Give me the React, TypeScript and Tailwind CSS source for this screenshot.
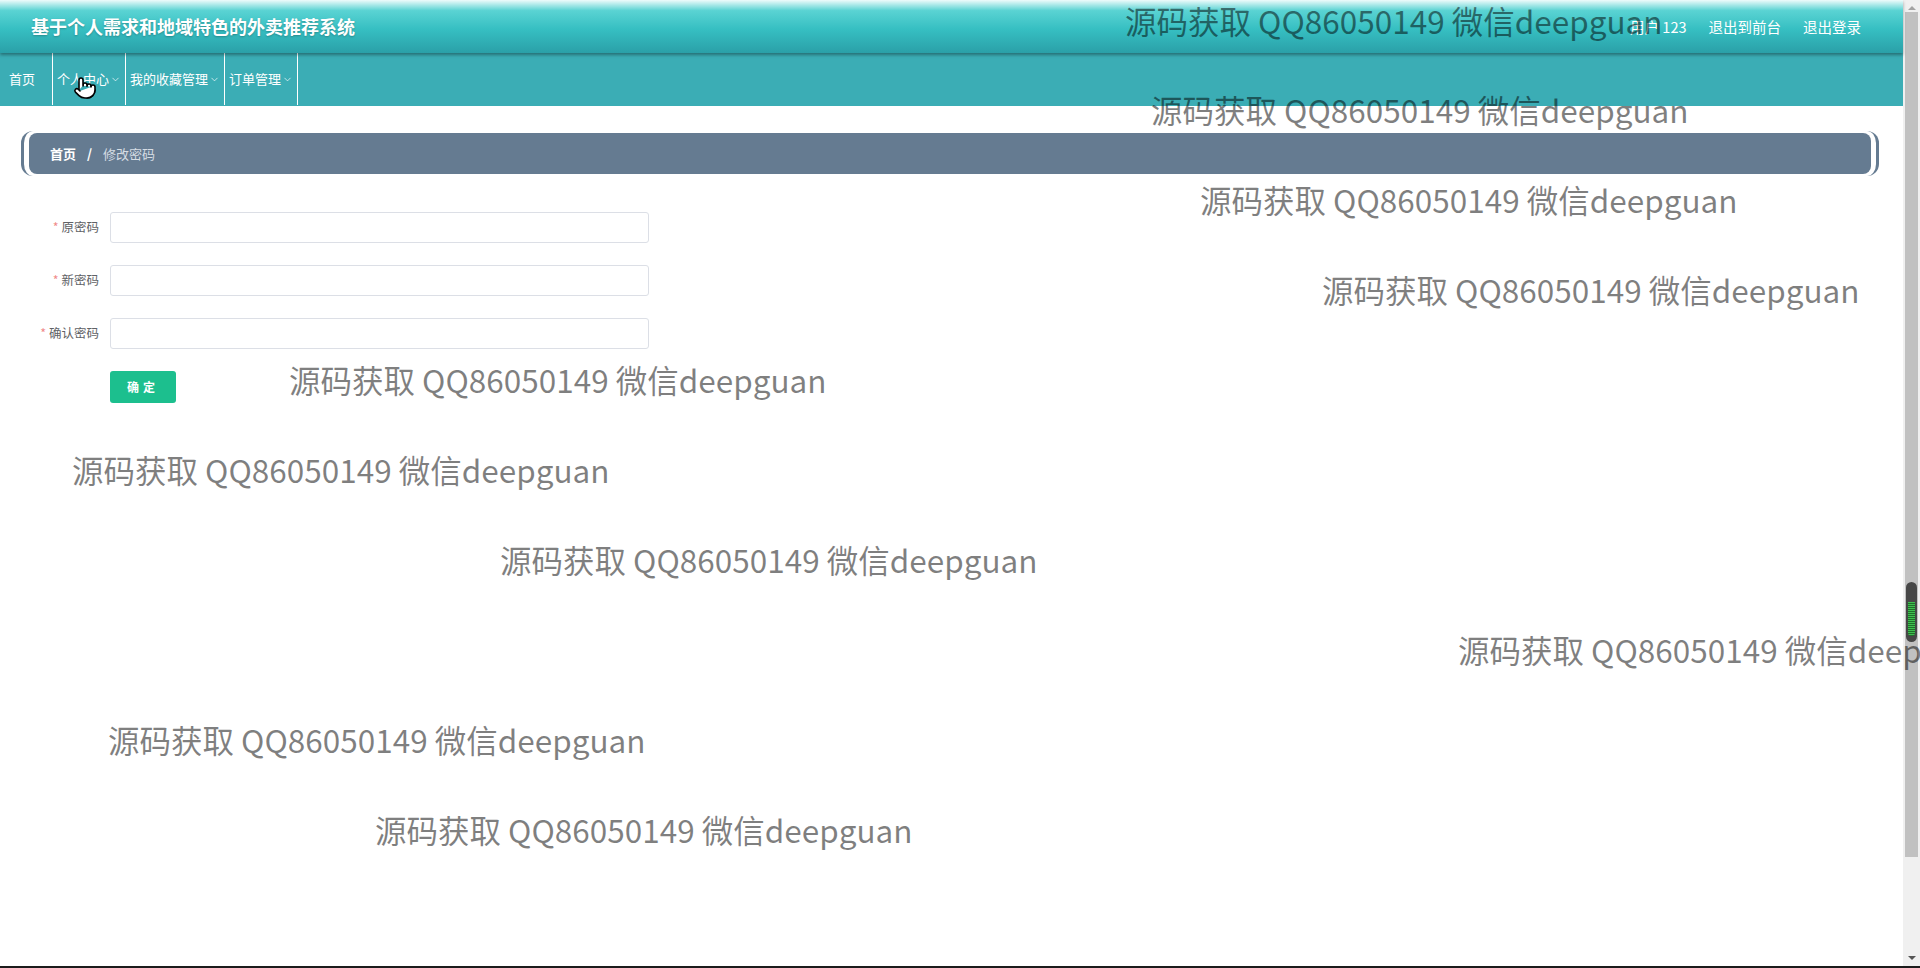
import React from 'react';
import { ChevronDown, Pointer } from 'lucide-react';

const WATERMARK = '源码获取 QQ86050149 微信deepguan';

// 水印位置（整页坐标）
const marks = [
  { x: 1125, y: 1 },
  { x: 1151, y: 90 },
  { x: 1200, y: 180 },
  { x: 1322, y: 270 },
  { x: 289, y: 360 },
  { x: 72, y: 450 },
  { x: 500, y: 540 },
  { x: 1458, y: 630 },
  { x: 108, y: 720 },
  { x: 375, y: 810 },
];

const navItems = [
  { label: '个人中心', drop: true },
  { label: '我的收藏管理', drop: true },
  { label: '订单管理', drop: true },
];

const fields = ['原密码', '新密码', '确认密码'];

function Scrollbar() {
  return (
    <div className="flex w-[17px] flex-col items-center bg-[#f0f0f0]">
      <div className="flex h-[10px] items-end justify-center">
        <div className="h-0 w-0 border-x-[4px] border-b-[4px] border-x-transparent border-b-[#a3a3a3]" />
      </div>
      <div className="relative mt-[2px] h-[845px] w-[13px] bg-[#c1c1c1]">
        <div className="absolute left-[1px] top-[570px] flex h-[60px] w-[11px] flex-col items-center rounded-full bg-[#474747] pt-[20px]">
          <div className="h-[34px] w-[7px] rounded-b-full bg-[repeating-linear-gradient(180deg,#3fbf4f_0px,#3fbf4f_1px,#1f6f2a_1px,#1f6f2a_2px)]" />
        </div>
      </div>
      <div className="flex-1" />
      <div className="mb-[6px] h-0 w-0 border-x-[4px] border-t-[4px] border-x-transparent border-t-[#555]" />
    </div>
  );
}

export default function App() {
  return (
    <div
      className="relative flex h-[968px] w-full flex-col overflow-hidden bg-white"
      style={{ fontFamily: '"Noto Sans CJK SC", "Noto Sans", sans-serif' }}
    >
      <div className="flex min-h-0 flex-1">
        <div className="relative flex min-w-0 flex-1 flex-col">
          {/* 顶部标题栏 */}
          <header className="relative z-10 flex h-[53px] items-center justify-between bg-[linear-gradient(180deg,#eefbfb_0%,#5ad3d3_20%,#36bfc2_55%,#2aa0a8_100%)] pl-[31px] pr-[42px] shadow-[0_2px_3px_rgba(0,0,0,0.35)]">
            <h1 className="text-[18px] font-bold text-white [text-shadow:0_1px_2px_rgba(0,0,0,0.25)]">
              基于个人需求和地域特色的外卖推荐系统
            </h1>
            <div className="flex items-center gap-[22px] text-[14.5px] text-white">
              <span>用户 123</span>
              <span>退出到前台</span>
              <span>退出登录</span>
            </div>
          </header>

          {/* 导航 */}
          <nav className="relative flex h-[53px] items-stretch bg-[#3badb5] pb-[1px] text-[13px] text-white">
            <div className="flex w-[53px] items-center border-r border-white pl-[9px]">首页</div>
            {navItems.map((item) => (
              <div
                key={item.label}
                className="flex items-center gap-[1px] border-r border-white px-[4px]"
              >
                <span>{item.label}</span>
                {item.drop && <ChevronDown size={11} strokeWidth={1.5} />}
              </div>
            ))}
            <Pointer
              size={24}
              strokeWidth={1.6}
              className="absolute left-[73px] top-[23px] fill-white text-black"
            />
          </nav>

          {/* 面包屑 */}
          <div className="ml-[21px] mr-[24px] mt-[25px] rounded-[12px] border-x-[3px] border-[#657b91] px-[5px] py-[2px]">
            <div className="flex h-[41px] items-center gap-[11px] rounded-[8px] bg-[#657b91] pl-[21px] text-[13px]">
              <span className="font-bold text-white">首页</span>
              <span className="font-bold text-white">/</span>
              <span className="text-[#d6dde4]">修改密码</span>
            </div>
          </div>

          {/* 表单 */}
          <form className="mt-[36px] flex flex-col gap-[22px] pl-[19px]">
            {fields.map((f) => (
              <div key={f} className="flex items-center">
                <label className="w-[80px] text-right text-[12.5px] text-[#606266]">
                  <span className="mr-[3px] text-[#f08a8a]">*</span>
                  {f}
                </label>
                <input
                  type="password"
                  className="ml-[11px] h-[31px] w-[539px] rounded-[3px] border border-[#dcdfe6] bg-white px-[10px] text-[13px] outline-none"
                />
              </div>
            ))}
            <div className="pl-[91px]">
              <button
                type="button"
                className="h-[32px] w-[66px] rounded-[3px] bg-[#1cbf8e] text-[12px] font-bold tracking-[4px] text-white"
              >
                确定
              </button>
            </div>
          </form>
        </div>
        <Scrollbar />
      </div>
      <div className="h-[2px] bg-[#1c1c1c]" />

      {/* 水印层 */}
      <div className="pointer-events-none absolute inset-0 z-20 overflow-hidden">
        {marks.map((m, i) => (
          <div
            key={i}
            className="absolute whitespace-nowrap text-[31.5px] leading-[38px] text-black/50"
            style={{ left: m.x, top: m.y }}
          >
            {WATERMARK}
          </div>
        ))}
      </div>
    </div>
  );
}
